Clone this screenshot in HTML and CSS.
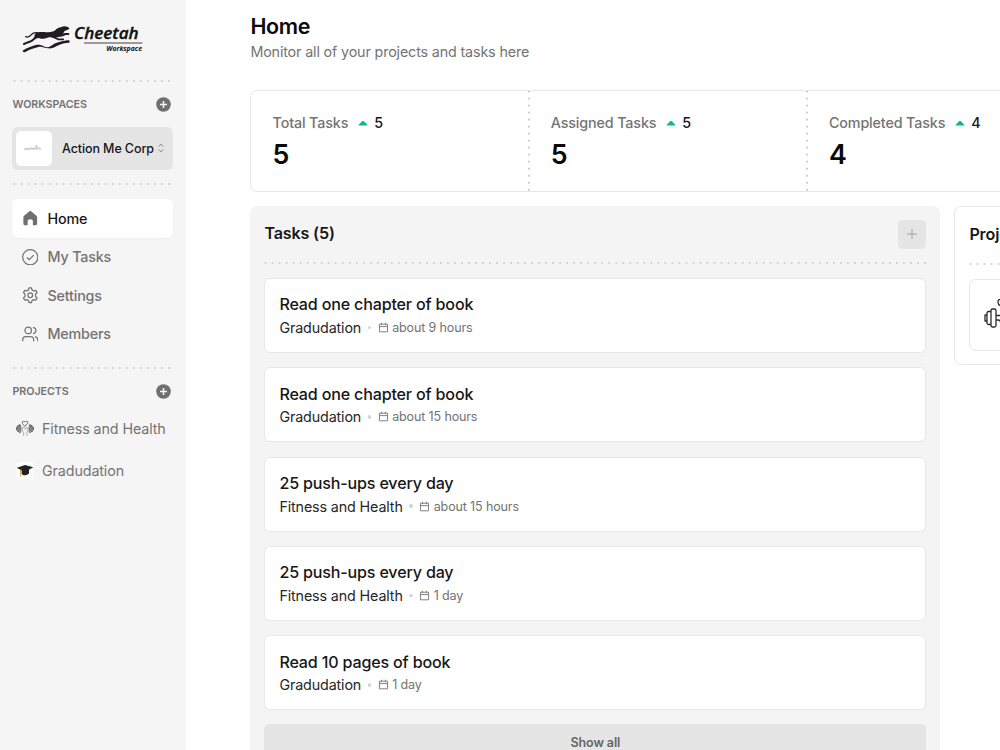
FILE: index.html
```html
<!DOCTYPE html>
<html lang="en">
<head>
<meta charset="utf-8">
<title>Cheetah Workspace</title>
<link rel="stylesheet" href="styles.css">
</head>
<body>
<svg class="defs" width="0" height="0">
  <symbol id="plus-circle" viewBox="0 0 15 15"><circle cx="7.5" cy="7.5" r="7.3" fill="#6f6f6f"/><path d="M7.5 4v7M4 7.5h7" stroke="#f5f5f5" stroke-width="1.5"/></symbol>
  <symbol id="calendar" viewBox="0 0 12 12"><path d="M1.6 2.4h8.8v8.3H1.6zM1.6 5h8.8M3.9 .8v2.6M8.1 .8v2.6" fill="none" stroke="#777" stroke-width="1"/></symbol>
  <symbol id="triangle" viewBox="0 0 10 6"><path d="M1.2 5.6Q.2 5.600 .9 4.600L4.200 1.200Q5 .5 5.800 1.200L9.100 4.600Q9.800 5.600 8.800 5.600z" fill="#10b981"/></symbol>
</svg>
<div class="app">
  <aside class="sidebar">
    <svg class="logo" viewBox="60 36 375 102">
      <g fill="none" stroke="#211c20" stroke-linecap="round" stroke-linejoin="round">
        <path d="M77 80c8 4 13-1 18-7 4-5 9-6 17-5" stroke-width="4"/>
        <path d="M112 79c-6 4-10 8-16 13-6 4-14 5-24 10" stroke-width="6"/>
        <path d="M172 77c10 1 18-2 24-5l9 0" stroke-width="6"/>
        <path d="M158 80l16 8 16 0" stroke-width="5"/>
      </g>
      <path d="M104 74c4-7 11-8 22-8 13 1 27 1 38-4 7-7 12-9 18-10 8-4 15-4 21-1 4 2 6 4 4 7-5 3-11 3-14 6l-4 8-12 9-14 3c-8-2-14-3-21-1-7 4-16 5-25 1-6 0-10 2-15 1z" fill="#211c20"/>
      <path d="M68 122c12-8 24-12 37-16 10-3 18-1 26 3 7 3 13 4 20 0 8-6 17-12 30-14 10-2 18-4 26-4q4 3 1 7c-13 0-24 3-36 9-9 5-17 9-28 8-10-1-18-6-29-4-14 4-26 7-39 15q-7 2-8-4z" fill="#211c20"/>
      <text class="brand" x="222" y="88" textLength="194" lengthAdjust="spacingAndGlyphs">Cheetah</text>
      <path d="M252 99h175" stroke="#211c20" stroke-width="2.5"/>
      <text class="brand-sub" x="319" y="123" textLength="107" lengthAdjust="spacingAndGlyphs">Workspace</text>
    </svg>
    <div class="dots"></div>
    <div class="heading"><span>WORKSPACES</span><svg><use href="#plus-circle"/></svg></div>
    <div class="switcher">
      <div class="avatar"><svg viewBox="0 0 24 10"><path d="M1 5.5h20M2 6l3-1 2 1 3-2 2 2 2-3 2-2-1 4 3-1 2 1" fill="none" stroke="#999" stroke-width=".6"/></svg></div>
      <span>Action Me Corp</span>
      <svg class="chevrons" viewBox="0 0 6 10"><path d="M.8 3.4L3 1.200l2.200 2.200M.8 6.600L3 8.800l2.200-2.200" fill="none" stroke="#777" stroke-width=".9"/></svg>
    </div>
    <div class="dots dots-nav"></div>
    <nav class="nav">
      <a class="nav-item active"><svg viewBox="0 0 24 24"><path d="M10.800 1.700q1.200-1 2.400 0l7.800 6.600q1 .9 1 2.200V20q0 2-2 2h-4.200v-6.200q0-2.500-3.800-2.500t-3.800 2.500V22H4q-2 0-2-2v-9.500q0-1.300 1-2.200z" fill="#6f6f6f"/></svg><span>Home</span></a>
      <a class="nav-item"><svg viewBox="0 0 24 24"><circle cx="12" cy="12" r="11"/><path d="M7.300 12.400l3.200 3.200 6.500-6.700"/></svg><span>My Tasks</span></a>
      <a class="nav-item"><svg viewBox="0 0 24 24"><path d="M9.500 4.200L10.200 1.200h3.600l.7 3 2.500 1.500 3-.9 1.900 3.200-2.200 2.100v3.800l2.200 2.100-1.900 3.200-3-.9-2.500 1.500-.7 3h-3.600l-.7-3L7 18.300l-3 .9-1.900-3.200 2.200-2.100v-3.800L2.100 8 4 4.800l3 .9z" stroke-linejoin="round"/><circle cx="12" cy="12" r="3.400"/></svg><span>Settings</span></a>
      <a class="nav-item"><svg viewBox="0 0 24 24"><circle cx="9" cy="6.500" r="4.700"/><path d="M1 22v-2q0-4.700 4.500-4.700h7q4.500 0 4.500 4.700v2M16 2c5.600 1 5.600 8 0 9M19 15.500q4 .8 4 4.700V22"/></svg><span>Members</span></a>
    </nav>
    <div class="dots dots-projects"></div>
    <div class="heading heading-projects"><span>PROJECTS</span><svg><use href="#plus-circle"/></svg></div>
    <div class="project"><svg viewBox="0 0 54 48">
      <g fill="none" stroke="#444" stroke-width="2.400" stroke-linejoin="round" stroke-linecap="round">
        <rect x="9" y="14" width="5" height="23" rx="2"/><rect x="4" y="17" width="5" height="17" rx="2"/><path d="M1.500 22v6"/>
        <rect x="40" y="14" width="5" height="23" rx="2"/><rect x="45" y="17" width="5" height="17" rx="2"/><path d="M52.500 22v6"/>
        <path d="M20 11c-5-7 2-10 7-6 5-4 12-1 7 6l-7 6z"/>
        <path d="M15 23h4M36 23h4M18 30c0-8 3-10 8-9M19 31l4 5v9M36 31c0-8-2-10-6-9l-3 6M36 31l-3 5v9" stroke="#777" stroke-width="1.800"/>
      </g></svg><span>Fitness and Health</span></div>
    <div class="project"><svg viewBox="0 0 54 54"><rect x="0" y="0" width="54" height="54" rx="8" fill="#fff"/><path d="M0 19l27-9 27 7-14 8v13c-7 7-19 6-24 1V28z" fill="#252322"/><path d="M12 25l1 23" stroke="#dc9d39" stroke-width="3"/></svg><span>Gradudation</span></div>
  </aside>
  <main class="main">
    <h1>Home</h1>
    <p class="subtitle">Monitor all of your projects and tasks here</p>
    <section class="stats">
      <div class="stat"><div class="stat-label"><span>Total Tasks</span><svg><use href="#triangle"/></svg><b>5</b></div><strong>5</strong></div>
      <div class="stat"><div class="stat-label"><span>Assigned Tasks</span><svg><use href="#triangle"/></svg><b>5</b></div><strong>5</strong></div>
      <div class="stat"><div class="stat-label"><span>Completed Tasks</span><svg><use href="#triangle"/></svg><b>4</b></div><strong>4</strong></div>
    </section>
    <div class="columns">
      <section class="tasks">
        <header class="tasks-head"><h2>Tasks (5)</h2><button class="add"><svg viewBox="0 0 12 12"><path d="M6 1v10M1 6h10" stroke="#a0a0a0"/></svg></button></header>
        <div class="dots"></div>
        <div class="task-list">
          <article class="task"><h3>Read one chapter of book</h3><div class="meta"><span>Gradudation</span><i></i><svg><use href="#calendar"/></svg><small>about 9 hours</small></div></article>
          <article class="task"><h3>Read one chapter of book</h3><div class="meta"><span>Gradudation</span><i></i><svg><use href="#calendar"/></svg><small>about 15 hours</small></div></article>
          <article class="task"><h3>25 push-ups every day</h3><div class="meta"><span>Fitness and Health</span><i></i><svg><use href="#calendar"/></svg><small>about 15 hours</small></div></article>
          <article class="task"><h3>25 push-ups every day</h3><div class="meta"><span>Fitness and Health</span><i></i><svg><use href="#calendar"/></svg><small>1 day</small></div></article>
          <article class="task"><h3>Read 10 pages of book</h3><div class="meta"><span>Gradudation</span><i></i><svg><use href="#calendar"/></svg><small>1 day</small></div></article>
        </div>
        <button class="show-all">Show all</button>
      </section>
      <section class="projects">
        <h2>Projects (2)</h2>
        <div class="dots"></div>
        <div class="project-card"><svg viewBox="0 0 39 36">
          <g fill="none" stroke="#2b2b2b" stroke-width="1.300" stroke-linejoin="round">
            <rect x="7" y="12" width="5" height="18" rx="1.500"/><path d="M7 14.500H4.500Q3 14.500 3 16v10q0 1.500 1.500 1.500H7M3 18H1v6h2"/>
            <path d="M12 18.500h4M12 23h3l3 3M18 2.500q-4-1-4 2.500t4 4"/>
            <rect x="27" y="12" width="5" height="18" rx="1.500"/><path d="M18 9l4-4"/>
          </g></svg></div>
      </section>
    </div>
  </main>
</div>
</body>
</html>
```
FILE: styles.css
```css
* { box-sizing: border-box; }
html, body { margin: 0; height: 100%; overflow: hidden; }
body { font-family: Inter, "Liberation Sans", sans-serif; color: #171717; background: #fff; }
h1, h2, h3, p { margin: 0; font-weight: 500; }
svg { display: block; flex: none; }
button { border: 0; font-family: inherit; padding: 0; }
.defs { position: absolute; }
.app { display: flex; height: 750px; overflow: hidden; }
.sidebar { flex: none; width: 186.400px; background: #f5f5f5; padding: 22px 13.400px 0 12px; }
.logo { width: 125px; height: 34px; margin-left: 8px; }
.brand { font: italic 600 46px "Open Sans", sans-serif; fill: #111; stroke: #111; stroke-width: 1; }
.brand-sub { font: italic 700 19px "Open Sans", sans-serif; fill: #111; }
.dots { height: 2px; background: radial-gradient(circle, #d2d2d2 0.900px, transparent 1.300px) 0 0 / 7.030px 2px repeat-x; }
.sidebar .dots { margin: 24px 1px 0 -1px; }
.heading { display: flex; justify-content: space-between; align-items: center; height: 15px; margin-top: 14.500px; padding: 0 2px 0 .5px; font-size: 10.700px; font-weight: 600; letter-spacing: -.06px; color: #737373; }
.heading svg { width: 15px; height: 15px; }
.switcher { display: flex; align-items: center; height: 42.500px; margin-top: 15.500px; padding: 0 9px 0 4px; border-radius: 6px; background: #e5e5e5; font-size: 12.500px; font-weight: 500; letter-spacing: -.1px; }
.avatar { display: grid; place-items: center; width: 35.500px; height: 35.500px; margin-right: 10.500px; background: #fff; border-radius: 5px; }
.avatar svg { width: 21px; height: 9px; }
.chevrons { width: 6px; height: 10px; margin-left: auto; }
.sidebar .dots-nav { margin-top: 13.500px; }
.nav { display: flex; flex-direction: column; margin-top: 14px; }
.nav-item { display: flex; align-items: center; gap: 9.500px; height: 38.500px; padding-left: 9.500px; border-radius: 6px; font-size: 14.300px; font-weight: 500; letter-spacing: -.18px; color: #737373; }
.nav-item svg { width: 16.500px; height: 16.500px; fill: none; stroke: #737373; stroke-width: 1.800; }
.nav-item.active { background: #fff; color: #171717; box-shadow: 0 1px 2px rgba(0, 0, 0, .03); }
.nav-item.active svg { stroke: none; }
.sidebar .dots-projects { margin-top: 14px; }
.heading-projects { margin-top: 14.900px; }
.project { display: flex; align-items: center; gap: 8.500px; height: 42px; padding-left: 3.500px; font-size: 14.300px; font-weight: 400; letter-spacing: -.11px; color: #737373; white-space: nowrap; }
.heading-projects + .project { margin-top: 8.600px; }
.project svg { width: 18px; height: 16.500px; }
.main { flex: none; width: 1140px; padding: 14px 0 0 64px; }
h1 { font-size: 21.450px; line-height: 25px; font-weight: 600; letter-spacing: -.3px; color: #0a0a0a; }
.subtitle { margin-top: 3px; font-size: 14.300px; line-height: 20px; font-weight: 400; letter-spacing: -.14px; color: #737373; }
.stats { display: flex; width: 1113px; height: 102px; margin-top: 28px; border: 1px solid #e7e7e7; border-radius: 7px; }
.stat { flex: 0 0 278.200px; padding: 21px 0 0 21.200px; background: radial-gradient(circle, #cacaca .900px, transparent 1.300px) right -.5px top -3px / 2px 7.030px repeat-y; }
.stat-label { display: flex; align-items: center; height: 20px; font-size: 14.300px; font-weight: 500; letter-spacing: -.13px; color: #737373; }
.stat-label svg { width: 10px; height: 6px; margin: 1px 6px 0 10px; }
.stat-label b { color: #171717; font-weight: 500; }
.stat strong { display: block; margin-top: 6px; font-size: 26.800px; line-height: 32px; font-weight: 600; letter-spacing: -.3px; color: #0a0a0a; }
.columns { display: flex; align-items: flex-start; gap: 14px; margin-top: 14px; }
.tasks { flex: none; width: 690px; height: 590px; background: #f4f4f4; border-radius: 7px; padding: 14px; }
.tasks-head { display: flex; justify-content: space-between; height: 42px; }
h2 { font-size: 16.100px; line-height: 27px; font-weight: 600; letter-spacing: -.15px; }
.add { display: grid; place-items: center; width: 28.500px; height: 28.500px; border-radius: 5px; background: #e5e5e5; }
.add svg { width: 12px; height: 12px; }
.tasks .dots, .projects .dots { background-position: -2px 0; }
.task-list { display: flex; flex-direction: column; gap: 14.350px; margin-top: 14px; }
.task { height: 75px; padding: 15.200px 14px 0; background: #fff; border: 1px solid #e8e8e8; border-radius: 6px; }
.task h3 { font-size: 16.100px; line-height: 21px; font-weight: 500; letter-spacing: -.18px; }
.meta { display: flex; align-items: center; height: 20px; margin-top: 2.300px; font-size: 14.300px; letter-spacing: -.13px; color: #262626; }
.meta i { width: 3.500px; height: 3.500px; margin: 0 6.500px; border-radius: 50%; background: #d4d4d4; }
.meta svg { width: 11px; height: 11px; margin-right: 3.500px; }
.meta small { font-size: 12.500px; color: #737373; }
.show-all { display: block; width: 100%; height: 36px; margin-top: 14px; border-radius: 5px; background: #e5e5e5; font-size: 12.500px; font-weight: 600; letter-spacing: -.1px; color: #666; }
.projects { flex: none; width: 400px; height: 159px; padding: 14px; border: 1px solid #e7e7e7; border-radius: 7px; white-space: nowrap; }
.projects .dots { margin-top: 15px; }
.project-card { display: flex; align-items: center; width: 220px; height: 72px; margin-top: 14px; padding-left: 14px; border: 1px solid #e7e7e7; border-radius: 7px; }
.project-card svg { width: 39px; height: 36px; }
```
